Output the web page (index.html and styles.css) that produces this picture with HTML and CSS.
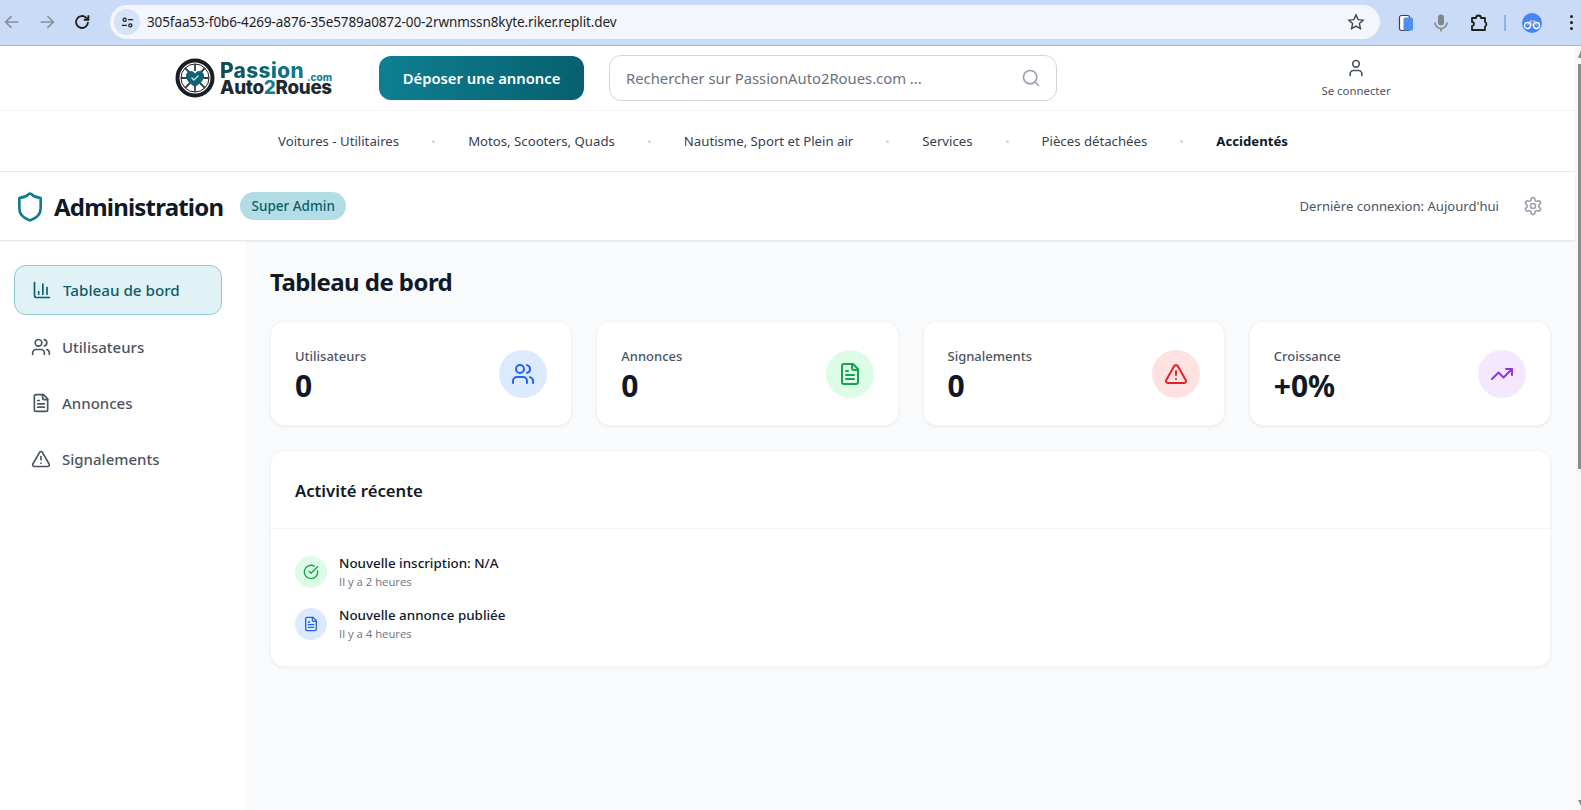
FILE: index.html
```html
<!DOCTYPE html>
<html lang="fr">
<head>
<meta charset="utf-8">
<title>Administration - PassionAuto2Roues</title>
<link rel="stylesheet" href="styles.css">
</head>
<body>
<svg class="sprite" aria-hidden="true">
  <symbol id="i-users" viewBox="0 0 24 24"><path d="M16 21v-2a4 4 0 0 0-4-4H6a4 4 0 0 0-4 4v2"/><circle cx="9" cy="7" r="4"/><path d="M22 21v-2a4 4 0 0 0-3-3.87"/><path d="M16 3.13a4 4 0 0 1 0 7.75"/></symbol>
  <symbol id="i-file" viewBox="0 0 24 24"><path d="M15 2H6a2 2 0 0 0-2 2v16a2 2 0 0 0 2 2h12a2 2 0 0 0 2-2V7Z"/><path d="M14 2v4a2 2 0 0 0 2 2h4"/><path d="M10 9H8"/><path d="M16 13H8"/><path d="M16 17H8"/></symbol>
  <symbol id="i-alert" viewBox="0 0 24 24"><path d="m21.73 18-8-14a2 2 0 0 0-3.48 0l-8 14A2 2 0 0 0 4 21h16a2 2 0 0 0 1.73-3"/><path d="M12 9v4"/><path d="M12 17h.01"/></symbol>
  <symbol id="i-trend" viewBox="0 0 24 24"><polyline points="22 7 13.5 15.5 8.5 10.5 2 17"/><polyline points="16 7 22 7 22 13"/></symbol>
  <symbol id="i-chart" viewBox="0 0 24 24"><path d="M3 3v16a2 2 0 0 0 2 2h16"/><path d="M18 17V9"/><path d="M13 17V5"/><path d="M8 17v-3"/></symbol>
  <symbol id="i-check" viewBox="0 0 24 24"><path d="M21.801 10A10 10 0 1 1 17 3.335"/><path d="m9 11 3 3L22 4"/></symbol>
  <symbol id="i-shield" viewBox="0 0 24 24"><path d="M20 13c0 5-3.5 7.5-7.66 8.95a1 1 0 0 1-.67-.01C7.5 20.5 4 18 4 13V6a1 1 0 0 1 1-1c2 0 4.5-1.2 6.24-2.72a1.17 1.17 0 0 1 1.52 0C14.51 3.81 17 5 19 5a1 1 0 0 1 1 1z"/></symbol>
  <symbol id="i-gear" viewBox="0 0 24 24"><path d="M12.22 2h-.44a2 2 0 0 0-2 2v.18a2 2 0 0 1-1 1.73l-.43.25a2 2 0 0 1-2 0l-.15-.08a2 2 0 0 0-2.73.73l-.22.38a2 2 0 0 0 .73 2.73l.15.1a2 2 0 0 1 1 1.72v.51a2 2 0 0 1-1 1.74l-.15.09a2 2 0 0 0-.73 2.73l.22.38a2 2 0 0 0 2.73.73l.15-.08a2 2 0 0 1 2 0l.43.25a2 2 0 0 1 1 1.73V20a2 2 0 0 0 2 2h.44a2 2 0 0 0 2-2v-.18a2 2 0 0 1 1-1.73l.43-.25a2 2 0 0 1 2 0l.15.08a2 2 0 0 0 2.73-.73l.22-.39a2 2 0 0 0-.73-2.73l-.15-.08a2 2 0 0 1-1-1.74v-.5a2 2 0 0 1 1-1.74l.15-.09a2 2 0 0 0 .73-2.73l-.22-.38a2 2 0 0 0-2.73-.73l-.15.08a2 2 0 0 1-2 0l-.43-.25a2 2 0 0 1-1-1.73V4a2 2 0 0 0-2-2z"/><circle cx="12" cy="12" r="3"/></symbol>
  <symbol id="i-user" viewBox="0 0 24 24"><path d="M19 21v-2a4 4 0 0 0-4-4H9a4 4 0 0 0-4 4v2"/><circle cx="12" cy="7" r="4"/></symbol>
  <symbol id="i-search" viewBox="0 0 24 24"><circle cx="11" cy="11" r="8"/><path d="m21 21-4.3-4.3"/></symbol>
</svg>

<div class="browser">
  <div class="browser-nav">
    <svg class="b-icon b-muted" viewBox="0 0 24 24"><path d="M19 12H5.5M11.5 5.5 5 12l6.500 6.500"/></svg>
    <svg class="b-icon b-muted" viewBox="0 0 24 24"><path d="M5 12h13.500M12.500 5.500 19 12l-6.500 6.500"/></svg>
    <svg class="b-icon b-dark" viewBox="0 0 24 24"><path d="M18.500 12a6.500 6.500 0 1 1-2-4.700L19 9.500M19 4.500v5h-5"/></svg>
  </div>
  <div class="omnibox">
    <span class="tune">
      <svg viewBox="0 0 24 24"><circle cx="7.500" cy="7.500" r="2.500"/><path d="M13 7.500h8M3 16.500h8"/><circle cx="16.500" cy="16.500" r="2.500"/></svg>
    </span>
    <span class="url">305faa53-f0b6-4269-a876-35e5789a0872-00-2rwnmssn8kyte.riker.replit.dev</span>
    <svg class="star" viewBox="0 0 24 24"><path d="m12 3.500 2.600 5.600 6 .7-4.500 4.100 1.200 6L12 16.900 6.700 19.900l1.200-6L3.400 9.800l6-.7z"/></svg>
  </div>
  <div class="browser-tools">
    <svg class="tool-panel" viewBox="0 0 20 20"><rect x="3.500" y="2.500" width="10" height="15" rx="2" fill="#fff" stroke="#3c4043" stroke-width="1.200"/><rect x="7.500" y="4.500" width="9.500" height="13" rx="1.500" fill="#4c8ff0"/></svg>
    <svg class="tool-mic" viewBox="0 0 20 20"><rect x="7" y="1.500" width="6" height="11" rx="3" fill="#80868b"/><path d="M4 9.500a6 6 0 0 0 12 0M10 15.500v3" fill="none" stroke="#80868b" stroke-width="1.600"/></svg>
    <svg class="tool-puzzle" viewBox="0 0 20 20"><path d="M3 5h4a2.500 2.500 0 0 1 5 0h4v4a2.500 2.500 0 0 1 0 4.500V17H3v-4a2 2 0 0 0 0-4z" fill="none" stroke="#1f1f1f" stroke-width="1.800" stroke-linejoin="round"/></svg>
    <span class="tool-sep"></span>
    <span class="avatar">
      <svg viewBox="0 0 20 20"><circle cx="5.500" cy="12.500" r="3" fill="none" stroke="#fff" stroke-width="1.300"/><circle cx="14.500" cy="12.500" r="3" fill="none" stroke="#fff" stroke-width="1.300"/><path d="M5.500 12.500 8 8h5l1.500 4.500M8 8l2.500 4.500L13 8" fill="none" stroke="#f3c6b4" stroke-width="1"/></svg>
    </span>
    <span class="kebab"><i></i><i></i><i></i></span>
  </div>
</div>

<div class="viewport">
  <div class="page">
    <header class="site-header">
      <a class="logo">
        <svg class="logo-wheel" viewBox="0 0 40 40">
          <circle cx="20" cy="20" r="17.500" fill="none" stroke="#1b1f23" stroke-width="4"/>
          <circle cx="20" cy="20" r="14" fill="none" stroke="#1b1f23" stroke-width="1"/>
          <g stroke="#3a3f44" stroke-width="1.800">
            <path d="M20 6v7M20 27v7M6 20h7M27 20h7M10 10l5 5M30 10l-5 5M10 30l5-5M30 30l-5-5"/>
          </g>
          <path d="M20 29c-5-3.500-9-6.500-9-11a4.800 4.800 0 0 1 9-2.400 4.800 4.800 0 0 1 9 2.400c0 4.500-4 7.500-9 11z" fill="#0f6474"/>
          <path d="m16.500 19.500 2.500 2.500 4.500-4.500" fill="none" stroke="#bfe3e8" stroke-width="1.400"/>
        </svg>
        <span class="logo-text">
          <span class="logo-row">
            <span class="logo-top">Passion</span>
            <span class="logo-com">.com</span>
          </span>
          <span class="logo-bottom">Auto<b>2</b>Roues</span>
        </span>
      </a>
      <button class="cta">Déposer une annonce</button>
      <div class="search">
        <span class="search-text">Rechercher sur PassionAuto2Roues.com ...</span>
        <svg class="ic search-icon"><use href="#i-search"/></svg>
      </div>
      <div class="account">
        <svg class="ic account-icon"><use href="#i-user"/></svg>
        <span>Se connecter</span>
      </div>
    </header>

    <nav class="cats">
      <a>Voitures - Utilitaires</a><i></i>
      <a>Motos, Scooters, Quads</a><i></i>
      <a>Nautisme, Sport et Plein air</a><i></i>
      <a>Services</a><i></i>
      <a>Pièces détachées</a><i></i>
      <a class="cat-strong">Accidentés</a>
    </nav>

    <section class="admin-bar">
      <svg class="ic shield"><use href="#i-shield"/></svg>
      <h2 class="admin-title">Administration</h2>
      <span class="badge">Super Admin</span>
      <span class="last-login">Dernière connexion: Aujourd'hui</span>
      <svg class="ic gear"><use href="#i-gear"/></svg>
    </section>

    <div class="workspace">
      <aside class="sidebar">
        <a class="side-item side-active"><svg class="ic"><use href="#i-chart"/></svg><span>Tableau de bord</span></a>
        <a class="side-item"><svg class="ic"><use href="#i-users"/></svg><span>Utilisateurs</span></a>
        <a class="side-item"><svg class="ic"><use href="#i-file"/></svg><span>Annonces</span></a>
        <a class="side-item"><svg class="ic"><use href="#i-alert"/></svg><span>Signalements</span></a>
      </aside>
      <main class="content">
        <h1 class="content-title">Tableau de bord</h1>
        <div class="stats">
          <div class="stat">
            <div class="stat-text"><p class="stat-label">Utilisateurs</p><p class="stat-value">0</p></div>
            <span class="stat-icon tint-blue"><svg class="ic"><use href="#i-users"/></svg></span>
          </div>
          <div class="stat">
            <div class="stat-text"><p class="stat-label">Annonces</p><p class="stat-value">0</p></div>
            <span class="stat-icon tint-green"><svg class="ic"><use href="#i-file"/></svg></span>
          </div>
          <div class="stat">
            <div class="stat-text"><p class="stat-label">Signalements</p><p class="stat-value">0</p></div>
            <span class="stat-icon tint-red"><svg class="ic"><use href="#i-alert"/></svg></span>
          </div>
          <div class="stat">
            <div class="stat-text"><p class="stat-label">Croissance</p><p class="stat-value">+0%</p></div>
            <span class="stat-icon tint-purple"><svg class="ic"><use href="#i-trend"/></svg></span>
          </div>
        </div>
        <section class="activity">
          <h3 class="activity-title">Activité récente</h3>
          <div class="activity-list">
            <div class="activity-item">
              <span class="activity-icon tint-green"><svg class="ic"><use href="#i-check"/></svg></span>
              <div><p class="activity-main">Nouvelle inscription: N/A</p><p class="activity-time">Il y a 2 heures</p></div>
            </div>
            <div class="activity-item">
              <span class="activity-icon tint-blue"><svg class="ic"><use href="#i-file"/></svg></span>
              <div><p class="activity-main">Nouvelle annonce publiée</p><p class="activity-time">Il y a 4 heures</p></div>
            </div>
          </div>
        </section>
      </main>
    </div>
  </div>
  <div class="scrollbar">
    <span class="sb-up"></span>
    <span class="sb-thumb"></span>
    <span class="sb-down"></span>
  </div>
</div>
</body>
</html>
```
FILE: styles.css
```css
* { box-sizing: border-box; }
html, body { height: 100%; }
body {
  margin: 0;
  overflow: hidden;
  display: flex;
  flex-direction: column;
  background: #fff;
  color: #111827;
  font-family: "Noto Sans", "Open Sans", sans-serif;
}
p, h1, h2, h3 { margin: 0; }
.sprite { display: none; }
.ic { width: 24px; height: 24px; fill: none; stroke: currentColor; stroke-width: 2; stroke-linecap: round; stroke-linejoin: round; flex: none; }

/* Browser bar */
.browser { height: 46px; flex: none; display: flex; align-items: flex-start; background: #c9dbf6; border-bottom: 1px solid #a9b6ca; }
.browser-nav { display: flex; width: 110px; padding: 11px 0 0 1px; gap: 13px; flex: none; }
.b-icon { width: 22px; height: 22px; fill: none; stroke-width: 1.800; }
.b-muted { stroke: #87919e; }
.b-dark { stroke: #1f1f1f; stroke-width: 2; }
.omnibox { width: 1270px; height: 34px; margin-top: 5px; border-radius: 17px; background: #f3f6fc; display: flex; align-items: center; padding: 0 12px 0 4px; flex: none; }
.tune { width: 26px; height: 26px; border-radius: 50%; background: #d6e2f6; display: flex; align-items: center; justify-content: center; flex: none; }
.tune svg { width: 15px; height: 15px; fill: none; stroke: #1f1f1f; stroke-width: 2; }
.url { margin-left: 7px; font-size: 13.500px; color: #1f1f1f; flex: 1; letter-spacing: -0.1px; }
.star { width: 20px; height: 20px; fill: none; stroke: #474747; stroke-width: 1.700; margin-right: 2px; }
.browser-tools { flex: 1; display: flex; align-items: center; height: 45px; padding-left: 16px; }
.browser-tools svg { flex: none; }
.tool-panel { width: 20px; height: 20px; }
.tool-mic { width: 20px; height: 20px; margin-left: 15px; }
.tool-puzzle { width: 20px; height: 20px; margin-left: 18px; }
.tool-sep { width: 1.500px; height: 16px; background: #8fb2e6; margin-left: 15px; }
.avatar { width: 20px; height: 20px; border-radius: 50%; background: #4287f5; margin-left: 16px; display: flex; flex: none; }
.avatar svg { width: 20px; height: 20px; }
.kebab { display: flex; flex-direction: column; gap: 3px; margin-left: 28px; }
.kebab i { width: 3px; height: 3px; border-radius: 50%; background: #1f1f1f; }

.viewport { flex: 1; display: flex; min-height: 0; }
.page { flex: 1; min-width: 0; display: flex; flex-direction: column; }
.scrollbar { width: 6px; flex: none; background: #f8f8f8; display: flex; flex-direction: column; align-items: flex-end; padding-top: 4px; }
.sb-up { width: 0; height: 0; border-left: 3px solid transparent; border-bottom: 8px solid #8b8b8b; }
.sb-thumb { width: 3px; height: 405px; background: #8b8b8b; margin-top: 6px; }
.sb-down { width: 0; height: 0; border-left: 3px solid transparent; border-top: 6px solid #8b8b8b; margin-top: auto; margin-bottom: 4px; }

/* Site header */
.site-header { height: 65px; flex: none; display: flex; align-items: center; padding-left: 175px; border-bottom: 1px solid #f3f4f6; }
.logo { display: flex; align-items: center; width: 204px; flex: none; }
.logo-wheel { width: 40px; height: 40px; flex: none; }
.logo-text { margin-left: 5px; width: 112px; display: flex; flex-direction: column; font-family: "Inter", sans-serif; font-weight: 800; }
.logo-row { display: flex; align-items: flex-end; justify-content: space-between; height: 19px; }
.logo-top { font-size: 21px; line-height: 19px; letter-spacing: 0.300px; background: linear-gradient(90deg, #0c4a56, #12808f); -webkit-background-clip: text; background-clip: text; color: transparent; }
.logo-com { font-size: 10px; line-height: 10px; color: #12808f; margin-bottom: -2px; }
.logo-bottom { font-size: 18.800px; line-height: 15px; letter-spacing: -0.300px; color: #1d2a30; white-space: nowrap; }
.logo-bottom b { color: #12808f; font-weight: 800; }
.cta { width: 205px; height: 44px; flex: none; border: 0; border-radius: 12px; background: linear-gradient(90deg, #0e7f92, #07606e); color: #fff; font: 600 14.800px "Noto Sans", sans-serif; }
.search { width: 448px; height: 46px; flex: none; margin-left: 25px; border: 1px solid #d1d5db; border-radius: 12px; display: flex; align-items: center; padding: 0 15px 0 16px; justify-content: space-between; }
.search-text { font-size: 14.800px; color: #6b7280; }
.search-icon { width: 20px; height: 20px; color: #9ca3af; }
.account { margin-left: 265px; width: 68px; display: flex; flex-direction: column; align-items: center; gap: 5px; font-size: 11.400px; line-height: 15px; color: #4b5563; white-space: nowrap; }
.account-icon { width: 20px; height: 20px; color: #4b5563; }

/* Categories */
.cats { height: 61px; flex: none; display: flex; align-items: center; justify-content: center; padding-right: 9px; gap: 33px; font-size: 13.200px; color: #374151; border-bottom: 1px solid #e5e7eb; }
.cats i { width: 3px; height: 3px; border-radius: 50%; background: #d1d5db; }
.cat-strong { font-weight: 700; color: #111827; }

/* Admin bar */
.admin-bar { height: 69px; flex: none; display: flex; align-items: center; padding: 2px 32px 0 14px; border-bottom: 1px solid #e5e7eb; box-shadow: 0 1px 2px rgba(0,0,0,.05); position: relative; }
.shield { width: 32px; height: 32px; color: #0e7c8f; }
.admin-title { margin-left: 8px; font-size: 24px; line-height: 32px; font-weight: 700; letter-spacing: -0.800px; color: #111827; }
.badge { margin-left: 17px; margin-top: -2px; width: 106px; height: 28px; border-radius: 14px; background: #b2dde5; color: #0b5d6b; font-size: 13.500px; font-weight: 500; display: flex; align-items: center; justify-content: center; }
.last-login { margin-left: auto; margin-top: -2px; font-size: 13.100px; color: #4b5563; }
.gear { width: 20px; height: 20px; color: #9ca3af; margin-left: 24px; margin-top: -2px; stroke-width: 2; }

/* Workspace */
.workspace { flex: 1; display: flex; min-height: 0; }
.sidebar { width: 246px; flex: none; padding: 24px 24px 0 14px; display: flex; flex-direction: column; gap: 8px; background: #fff; }
.side-item { height: 48px; display: flex; align-items: center; gap: 11px; padding-left: 17px; border-radius: 12px; font-size: 15px; font-weight: 500; color: #4b5563; }
.side-active { height: 50px; padding-left: 17px; gap: 11px; font-size: 15.200px; background: #e0f2f6; border: 1px solid #8fc8d5; color: #0b5d6b; }
.side-item .ic { width: 20px; height: 20px; }
.content { flex: 1; min-width: 0; padding: 24px; background: #f9fafb; }
.content-title { font-size: 24px; line-height: 34px; font-weight: 700; letter-spacing: -0.550px; color: #111827; margin-bottom: 22px; }
.stats { display: grid; grid-template-columns: repeat(4, 1fr); gap: 24px; }
.stat { height: 105px; background: #fff; border: 1px solid #f3f4f6; border-radius: 14px; box-shadow: 0 1px 3px rgba(0,0,0,.06); padding: 2px 24px 0; display: flex; align-items: center; justify-content: space-between; }
.stat-label { font-size: 13px; line-height: 20px; font-weight: 500; color: #4b5563; margin-bottom: 2px; }
.stat-value { font-size: 30px; line-height: 36px; font-weight: 700; color: #111827; }
.stat-icon { width: 48px; height: 48px; margin-top: -2px; border-radius: 50%; display: flex; align-items: center; justify-content: center; flex: none; }
.tint-blue { background: #dbeafe; color: #2563eb; }
.tint-green { background: #dcfce7; color: #16a34a; }
.tint-red { background: #fee2e2; color: #dc2626; }
.tint-purple { background: #f3e8ff; color: #9333ea; }
.activity { margin-top: 24px; background: #fff; border: 1px solid #f3f4f6; border-radius: 14px; box-shadow: 0 1px 3px rgba(0,0,0,.06); }
.activity-title { padding: 26px 24px 23px; font-size: 16.700px; line-height: 28px; font-weight: 600; color: #111827; border-bottom: 1px solid #f3f4f6; }
.activity-list { padding: 24px; display: flex; flex-direction: column; gap: 15px; }
.activity-item { display: flex; align-items: center; gap: 12px; }
.activity-icon { width: 32px; height: 32px; border-radius: 50%; display: flex; align-items: center; justify-content: center; flex: none; }
.activity-icon .ic { width: 16px; height: 16px; }
.activity-main { font-size: 13.400px; line-height: 20px; font-weight: 500; color: #111827; }
.activity-time { margin-top: 1px; font-family: "Open Sans", sans-serif; font-size: 11.300px; line-height: 16px; color: #6b7280; }
```
